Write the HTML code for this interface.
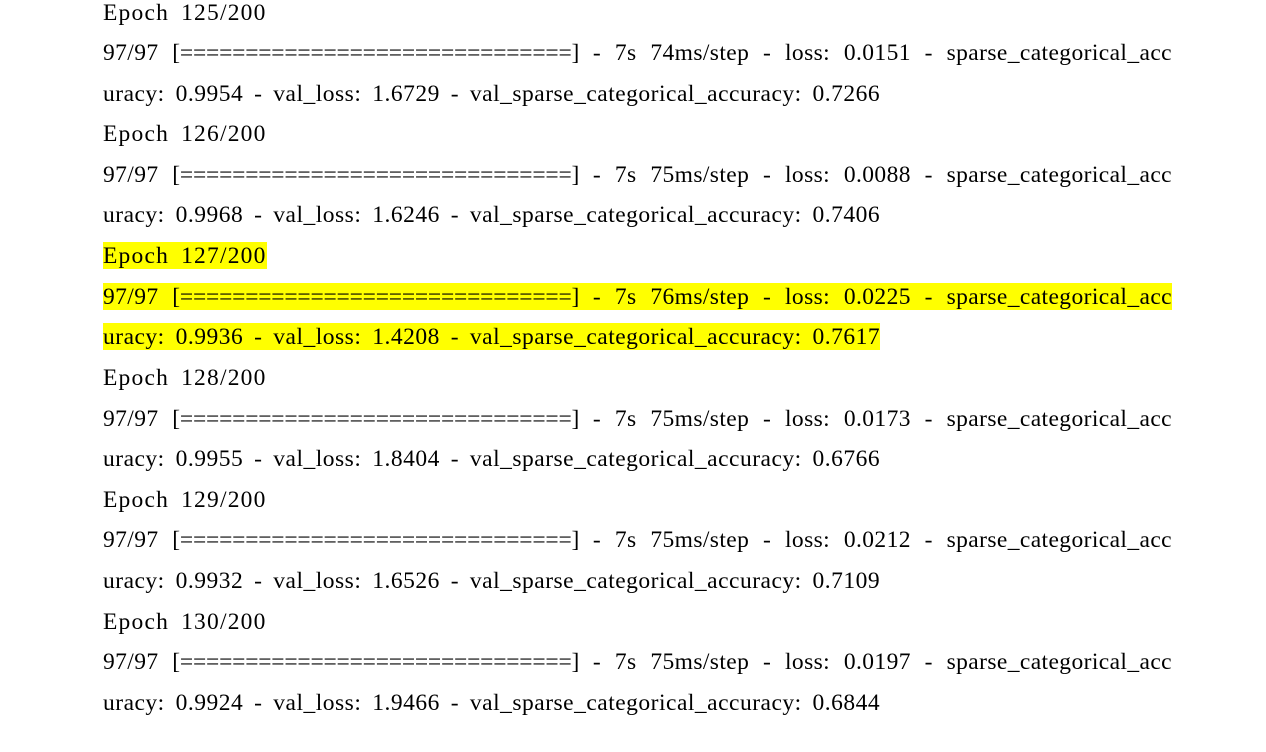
<!DOCTYPE html>
<html><head><meta charset="utf-8"><style>
body{margin:0;background:#fff;width:1266px;height:752px;overflow:hidden;position:relative;font-family:"Liberation Serif","DejaVu Serif",serif;font-size:23.5px;color:#000}
.l{position:absolute;left:103px;height:27px;line-height:29px;white-space:nowrap;word-spacing:4.5px;letter-spacing:0.5px}
.e{letter-spacing:1.2px;word-spacing:5px}
.j{width:1069px;text-align:justify;text-align-last:justify;white-space:normal;word-spacing:0;letter-spacing:0.4px}
.eq{letter-spacing:-0.2px}
</style></head><body>
<div class="l e" style="top:-1px">Epoch 125/200</div>
<div class="l j" style="top:39px">97/97 <span class="eq">[==============================]</span> - 7s 74ms/step - loss: 0.0151 - sparse_categorical_acc</div>
<div class="l" style="top:80px">uracy: 0.9954 - val_loss: 1.6729 - val_sparse_categorical_accuracy: 0.7266</div>
<div class="l e" style="top:120px">Epoch 126/200</div>
<div class="l j" style="top:161px">97/97 <span class="eq">[==============================]</span> - 7s 75ms/step - loss: 0.0088 - sparse_categorical_acc</div>
<div class="l" style="top:201px">uracy: 0.9968 - val_loss: 1.6246 - val_sparse_categorical_accuracy: 0.7406</div>
<div class="l e" style="top:242px;background:#ffff00">Epoch 127/200</div>
<div class="l j" style="top:283px;background:#ffff00">97/97 <span class="eq">[==============================]</span> - 7s 76ms/step - loss: 0.0225 - sparse_categorical_acc</div>
<div class="l" style="top:323px;background:#ffff00">uracy: 0.9936 - val_loss: 1.4208 - val_sparse_categorical_accuracy: 0.7617</div>
<div class="l e" style="top:364px">Epoch 128/200</div>
<div class="l j" style="top:405px">97/97 <span class="eq">[==============================]</span> - 7s 75ms/step - loss: 0.0173 - sparse_categorical_acc</div>
<div class="l" style="top:445px">uracy: 0.9955 - val_loss: 1.8404 - val_sparse_categorical_accuracy: 0.6766</div>
<div class="l e" style="top:486px">Epoch 129/200</div>
<div class="l j" style="top:526px">97/97 <span class="eq">[==============================]</span> - 7s 75ms/step - loss: 0.0212 - sparse_categorical_acc</div>
<div class="l" style="top:567px">uracy: 0.9932 - val_loss: 1.6526 - val_sparse_categorical_accuracy: 0.7109</div>
<div class="l e" style="top:608px">Epoch 130/200</div>
<div class="l j" style="top:648px">97/97 <span class="eq">[==============================]</span> - 7s 75ms/step - loss: 0.0197 - sparse_categorical_acc</div>
<div class="l" style="top:689px">uracy: 0.9924 - val_loss: 1.9466 - val_sparse_categorical_accuracy: 0.6844</div>
</body></html>
